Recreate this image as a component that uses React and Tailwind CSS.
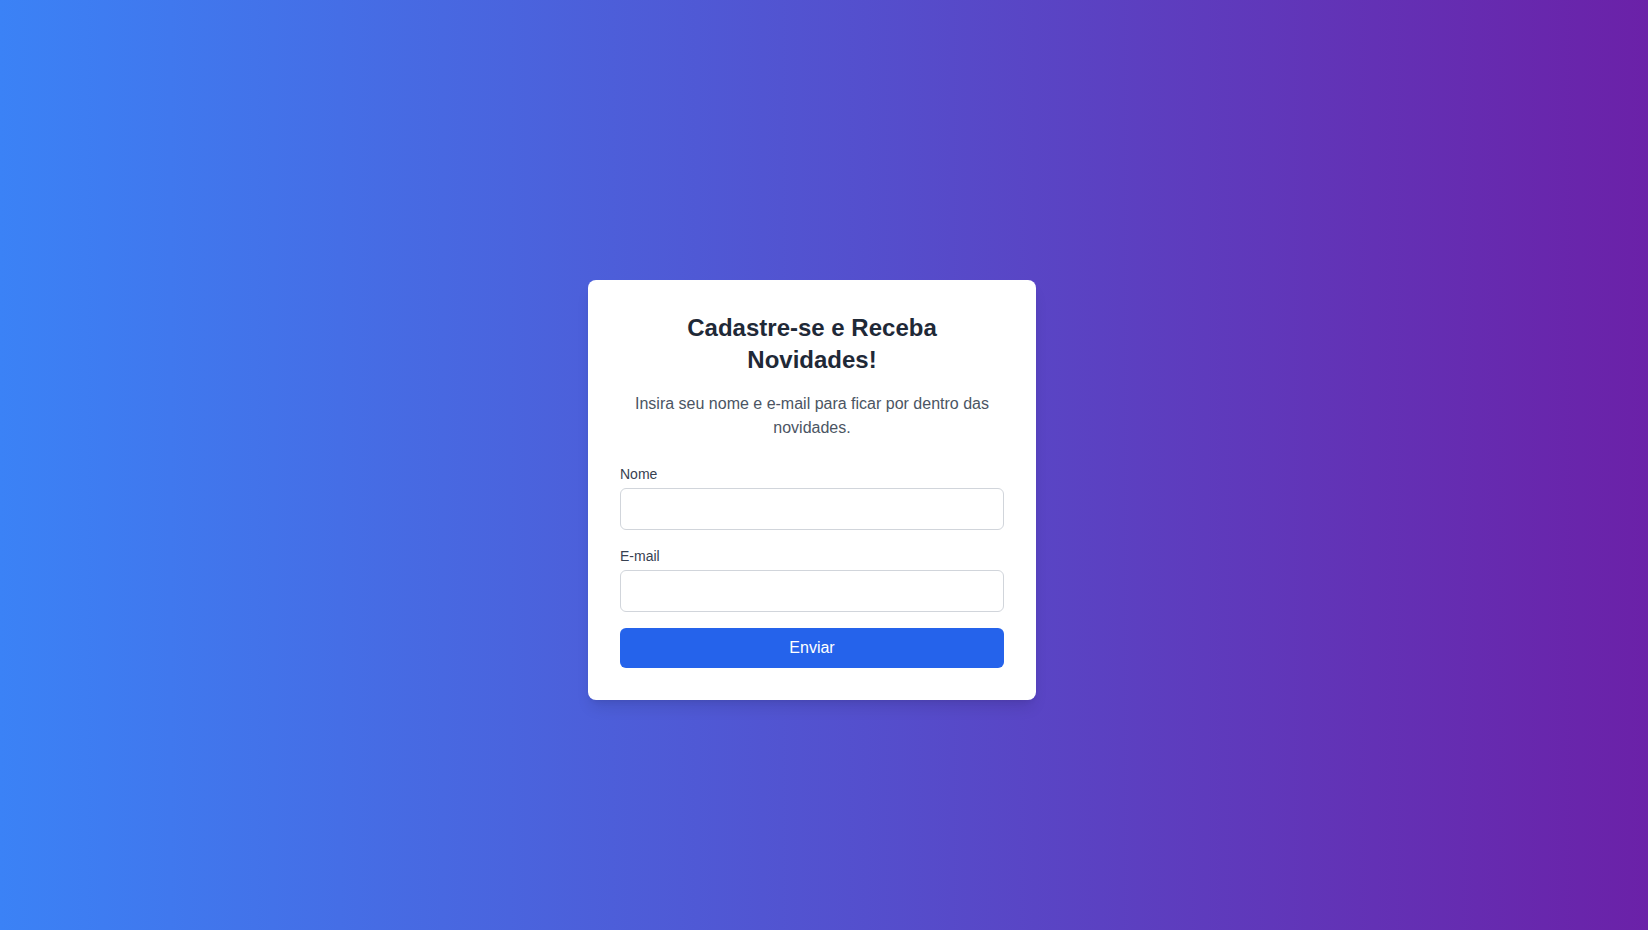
import React, { useState } from 'react';

const App = () => {
  const [nome, setNome] = useState('');
  const [email, setEmail] = useState('');

  const handleSubmit = (e) => {
    e.preventDefault();
  };

  return (
    <div
      className="min-h-screen w-full flex items-center justify-center pt-[49px] pr-6 bg-linear-to-r/srgb from-[#3b82f6] to-[#6b21a8]"
      style={{ fontFamily: '"Liberation Sans", Arial, sans-serif' }}
    >
      {/* Card */}
      <div className="w-[448px] bg-white rounded-lg shadow-lg p-8">
        <h2 className="text-2xl font-bold text-[#1f2937] text-center mb-4 mx-auto max-w-xs">
          Cadastre-se e Receba Novidades!
        </h2>
        <p className="text-base text-[#4b5563] text-center mb-6">
          Insira seu nome e e-mail para ficar por dentro das novidades.
        </p>

        <form onSubmit={handleSubmit} className="flex flex-col">
          <div className="mb-4">
            <label htmlFor="nome" className="block text-sm text-[#374151] mb-1">Nome</label>
            <input
              id="nome"
              type="text"
              value={nome}
              onChange={(e) => setNome(e.target.value)}
              className="w-full px-3 py-2 text-base border border-[#d1d5db] rounded-md outline-none focus:border-[#2563eb]"
            />
          </div>
          <div className="mb-4">
            <label htmlFor="email" className="block text-sm text-[#374151] mb-1">E-mail</label>
            <input
              id="email"
              type="email"
              value={email}
              onChange={(e) => setEmail(e.target.value)}
              className="w-full px-3 py-2 text-base border border-[#d1d5db] rounded-md outline-none focus:border-[#2563eb]"
            />
          </div>
          <button
            type="submit"
            className="w-full py-2 text-base text-white bg-[#2563eb] rounded-md hover:bg-[#1d4ed8]"
          >
            Enviar
          </button>
        </form>
      </div>
    </div>
  );
};

export default App;
